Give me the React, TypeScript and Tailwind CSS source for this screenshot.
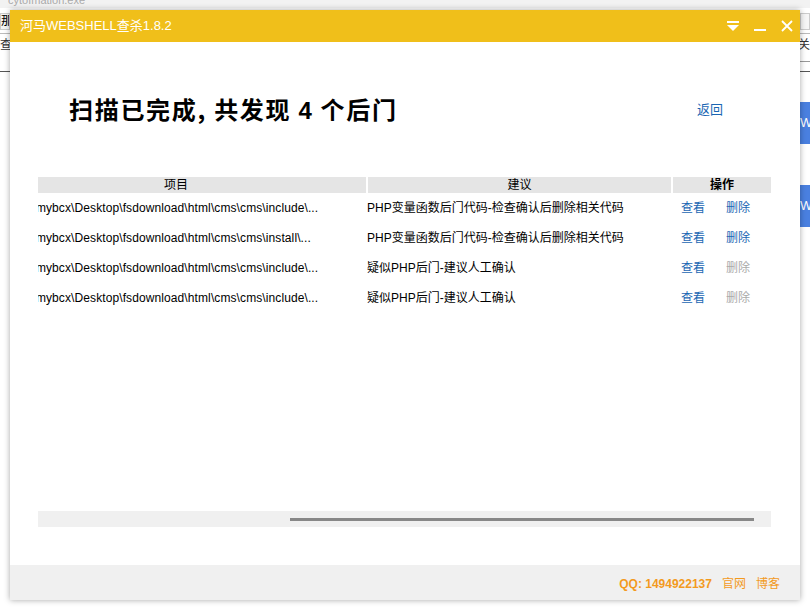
import React from "react"

const rows = [
  { path: "C:\\Users\\mybcx\\Desktop\\fsdownload\\html\\cms\\cms\\include\\...", tip: "PHP变量函数后门代码-检查确认后删除相关代码", del: true },
  { path: "C:\\Users\\mybcx\\Desktop\\fsdownload\\html\\cms\\cms\\install\\...", tip: "PHP变量函数后门代码-检查确认后删除相关代码", del: true },
  { path: "C:\\Users\\mybcx\\Desktop\\fsdownload\\html\\cms\\cms\\include\\...", tip: "疑似PHP后门-建议人工确认", del: false },
  { path: "C:\\Users\\mybcx\\Desktop\\fsdownload\\html\\cms\\cms\\include\\...", tip: "疑似PHP后门-建议人工确认", del: false },
]

function TitleButtons() {
  return (
    <div className="flex items-center gap-[15px] pr-[7px]">
      {/* dropdown menu */}
      <svg width="12" height="12" viewBox="0 0 12 12">
        <rect x="0" y="1" width="12" height="2" fill="#fff" />
        <path d="M0 5 H12 L6 11 Z" fill="#fff" />
      </svg>
      {/* minimize */}
      <svg width="12" height="12" viewBox="0 0 12 12">
        <rect x="0" y="9" width="12" height="2" fill="#fff" />
      </svg>
      {/* close */}
      <svg width="12" height="12" viewBox="0 0 12 12">
        <path d="M1 1 L11 11 M11 1 L1 11" stroke="#fff" strokeWidth="1.8" />
      </svg>
    </div>
  )
}

export default function App() {
  return (
    <div className="relative w-[810px] h-[610px] bg-white overflow-hidden font-['Liberation_Sans','Noto_Sans_CJK_SC',sans-serif]">
      {/* background app behind the window */}
      <div className="h-[8px] bg-[#f2f2f2] overflow-hidden pl-[8px]">
        <div className="text-[11px] leading-[12px] text-[#aaa] mt-[-6px]">cytofmation.exe</div>
      </div>
      <div className="flex justify-between h-[25px] pt-[5px]">
        <div className="w-[10px] h-[17px] border border-[#ccc] bg-[#f6f6f6] text-[12px] leading-[15px] overflow-hidden whitespace-nowrap">那网</div>
        <div className="w-[10px] h-[17px] border border-[#ccc] bg-[#f6f6f6]"></div>
      </div>
      <div className="h-px bg-[#bbb]"></div>
      <div className="flex justify-between text-[12px] leading-[20px] pt-[1px]">
        <span className="text-[#333]">查</span>
        <span className="text-[#333]">关</span>
      </div>
      <div className="flex justify-end">
        <div className="w-[10px] h-px bg-[#999] mt-[6px]"></div>
      </div>
      <div className="h-px bg-[#555] mt-[9px]"></div>
      <div className="flex flex-col items-end gap-[41px] mt-[30px]">
        <div className="w-[10px] h-[42px] bg-[#4a80e0] text-white text-[13px] leading-[42px] overflow-hidden whitespace-nowrap">W</div>
        <div className="w-[10px] h-[42px] bg-[#4a80e0] text-white text-[13px] leading-[42px] overflow-hidden whitespace-nowrap">W</div>
      </div>

      {/* window */}
      <div className="absolute left-[10px] top-[10px] w-[790px] h-[590px] bg-white flex flex-col shadow-[0_0_6px_rgba(0,0,0,0.35)]">
        <div className="h-[32px] bg-[#f0bf1a] flex items-center justify-between pl-[10px]">
          <span className="text-white text-[13px] font-['Liberation_Sans','Noto_Sans_CJK_SC',sans-serif]">河马WEBSHELL查杀1.8.2</span>
          <TitleButtons />
        </div>

        <div className="flex-1 flex flex-col px-[28px]">
          <div className="flex items-center justify-between h-[26px] mt-[55px] pl-[31px] pr-[49px]">
            <h1 className="text-[24px] font-semibold text-black font-['Noto_Sans_CJK_SC',sans-serif] tracking-[1.7px]">
              扫描已完成, 共发现 <span className="font-['Liberation_Sans',sans-serif] font-bold">4</span> 个后门
            </h1>
            <span className="text-[13px] text-[#1a66b3]">返回</span>
          </div>

          <div className="mt-[54px] h-[334px] overflow-hidden">
            <div className="ml-[-52px] w-[815px] text-[12px]">
              <div className="flex h-[16px] gap-[2px] leading-[16px] text-black">
                <div className="w-[380px] bg-[#e5e5e5] text-center">项目</div>
                <div className="w-[303px] bg-[#e5e5e5] text-center">建议</div>
                <div className="w-[98px] bg-[#e5e5e5] text-center font-bold">操作</div>
              </div>
              {rows.map((r, i) => (
                <div key={i} className="flex h-[30px] items-center gap-[2px] text-black">
                  <div className="w-[380px] indent-[-1px] tracking-[0.1px] whitespace-nowrap overflow-hidden">{r.path}</div>
                  <div className="w-[303px] ml-[-1px] whitespace-nowrap">{r.tip}</div>
                  <div className="w-[98px] flex pl-[9px] gap-[21px]">
                    <span className="text-[#1a66b3]">查看</span>
                    <span className={r.del ? "text-[#1a66b3]" : "text-[#aaaaaa]"}>删除</span>
                  </div>
                </div>
              ))}
            </div>
          </div>

          <div className="h-[16px] w-[733px] bg-[#f0f0f0] flex items-center pl-[252px] pr-[17px]">
            <div className="h-[3px] flex-1 bg-[#888]"></div>
          </div>
        </div>

        <div className="h-[35px] bg-[#f0f0f0] flex items-center justify-end gap-[10px] pr-[20px] pt-[3px] text-[12px] text-[#f39a1e]">
          <span className="font-bold">QQ: 1494922137</span>
          <span>官网</span>
          <span>博客</span>
        </div>
      </div>
    </div>
  )
}
